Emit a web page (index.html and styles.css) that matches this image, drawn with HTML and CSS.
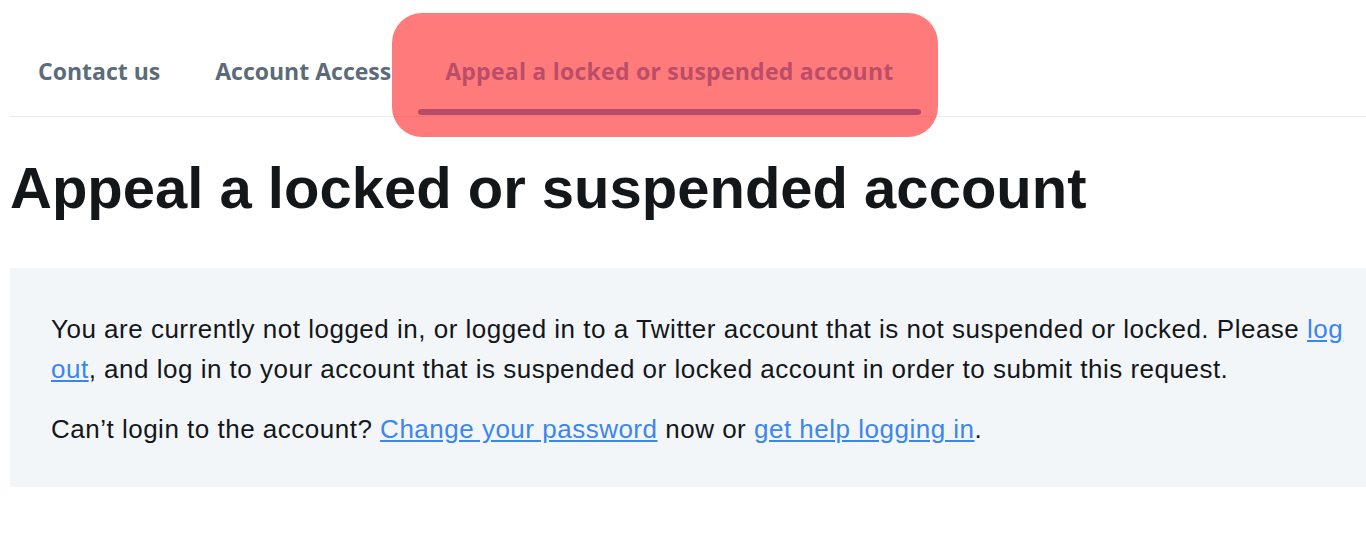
FILE: index.html
```html
<!DOCTYPE html>
<html lang="en">
<head>
<meta charset="utf-8">
<title>Appeal a locked or suspended account</title>
<link rel="stylesheet" href="styles.css">
</head>
<body>
<div class="page">
  <nav class="tabs">
    <a class="tab" href="#">Contact us</a>
    <a class="tab" href="#">Account Access</a>
    <a class="tab active" href="#">Appeal a locked or suspended account</a>
    <div class="highlight"></div>
  </nav>
  <h1 class="title">Appeal a locked or suspended account</h1>
  <div class="notice">
    <p>You are currently not logged in, or logged in to a Twitter account that is not suspended or locked. Please <a href="#">log out</a>, and log in to your account that is suspended or locked account in order to submit this request.</p>
    <p>Can’t login to the account? <a href="#">Change your password</a> now or <a href="#">get help logging in</a>.</p>
  </div>
</div>
</body>
</html>
```
FILE: styles.css
```css
* { box-sizing: border-box; }
html, body { margin: 0; padding: 0; background: #fff; }
.page { margin-left: 10px; }
.tabs {
  position: relative;
  display: flex;
  height: 117px;
  border-bottom: 1px solid #e6ecf0;
  font-family: "Open Sans", "Noto Sans", sans-serif;
  font-weight: 700;
  font-size: 23px;
}
.tab {
  display: flex;
  align-items: center;
  padding: 32px 27px 6px 28px;
  height: 100%;
  color: #5b6b7a;
  text-decoration: none;
  position: relative;
}
.tab.active {
  color: #3a7fcc;
  padding-left: 27px;
  letter-spacing: 0.25px;
}
.tab.active::after {
  content: "";
  position: absolute;
  left: 0; right: 0;
  bottom: 1px;
  height: 6px;
  border-radius: 3px;
  background: #347cc7;
}
.highlight {
  position: absolute;
  left: 382px;
  top: 13px;
  width: 546px;
  height: 124px;
  border-radius: 30px;
  background: rgba(255, 50, 50, 0.65);
}
.title {
  margin: 35px 0 0 0;
  font-family: "Liberation Sans", Arial, sans-serif;
  font-weight: 700;
  font-size: 58px;
  line-height: 72px;
  color: #14171a;
}
.notice {
  margin-top: 44px;
  background: #f3f6f9;
  padding: 41px 16px 38px 41px;
  font-family: "Liberation Sans", Arial, sans-serif;
  font-size: 26px;
  letter-spacing: 0.5px;
  line-height: 40px;
  color: #14171a;
}
.notice p { margin: 20px 0 0 0; }
.notice p:first-child { margin-top: 0; }
.notice a { color: #3b86ee; text-decoration: underline; }
```
